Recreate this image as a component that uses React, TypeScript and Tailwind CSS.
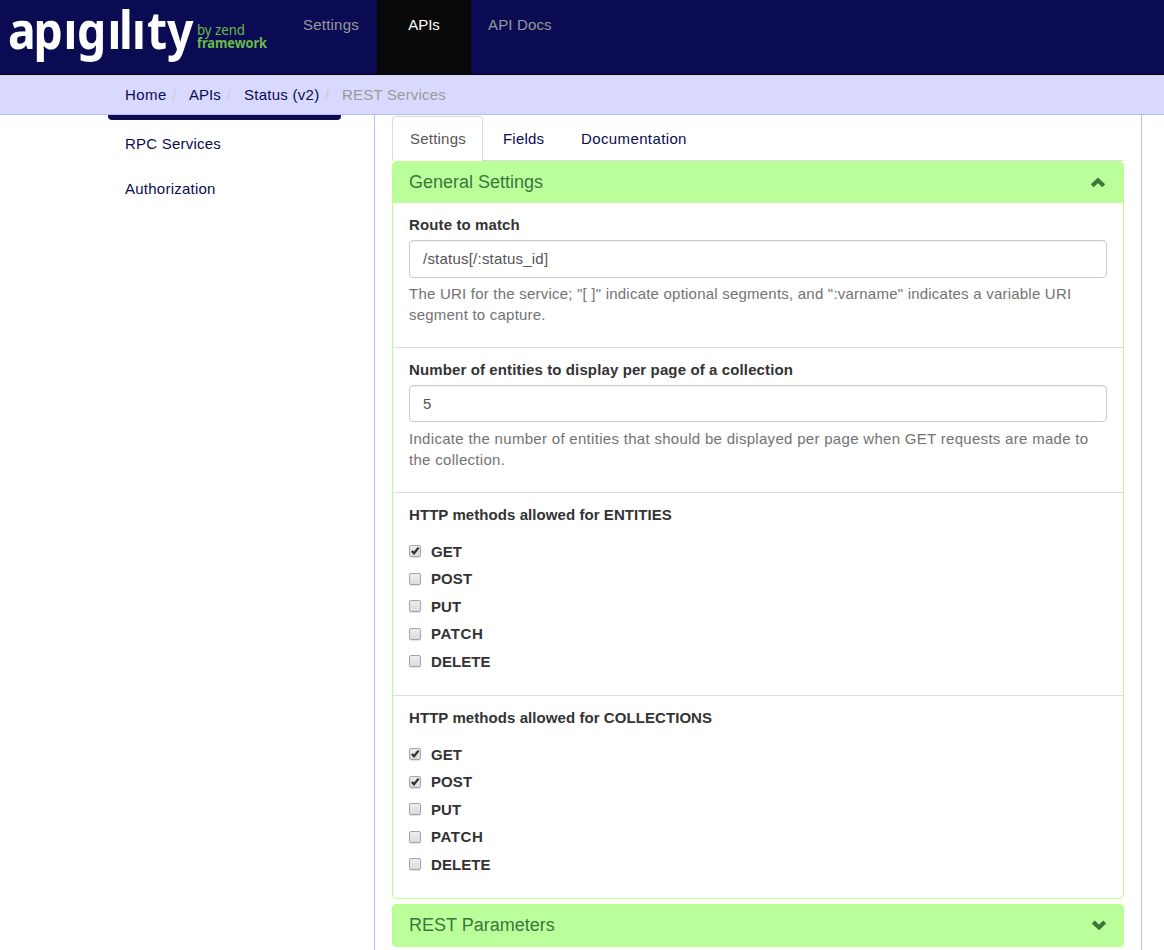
import React from 'react';

const METHODS = [
  { name: 'GET', tracking: 'tracking-[0.1px]' },
  { name: 'POST', tracking: 'tracking-[0.1px]' },
  { name: 'PUT', tracking: 'tracking-[0.1px]' },
  { name: 'PATCH', tracking: 'tracking-[0.6px]' },
  { name: 'DELETE', tracking: 'tracking-[0.05px]' },
];

function Logo() {
  return (
    <svg width="285" height="74" viewBox="0 0 285 74" className="block shrink-0" role="img" aria-label="apigility by zend framework">
      <defs>
        <clipPath id="wordmark">
          <rect x="0" y="20.5" width="196" height="53" />
          <rect x="120" y="0" width="14" height="22" />
          <rect x="145" y="0" width="20" height="22" />
        </clipPath>
      </defs>
      <g clipPath="url(#wordmark)">
        <text
          transform="scale(0.89 1)"
          x="9 37.6 71.3 86.5 120.8 133.7 148.3 165.2 187.6"
          y="49"
          fontSize="52"
          fontWeight="700"
          fill="#ffffff"
          fontFamily="'Noto Sans', sans-serif"
        >
          apigility
        </text>
      </g>
      <text x="197" y="34.5" fontSize="14" fill="#69bd45" fontFamily="'Noto Sans', sans-serif" textLength="48" lengthAdjust="spacingAndGlyphs">
        by zend
      </text>
      <text x="197" y="48" fontSize="14" fontWeight="700" fill="#69bd45" fontFamily="'Noto Sans', sans-serif" textLength="70" lengthAdjust="spacingAndGlyphs">
        framework
      </text>
    </svg>
  );
}

function Chevron({ down = false }: { down?: boolean }) {
  return (
    <svg width="16" height="12" viewBox="0 0 16 12" className="mb-[2px] block" aria-hidden="true">
      <path
        d={down ? 'M0.8 4.4 L3.7 1.5 L8 5.5 L12.3 1.5 L15.2 4.4 L8 11.3 Z' : 'M0.8 8.3 L8 1.4 L15.2 8.3 L12.3 11.2 L8 7.2 L3.7 11.2 Z'}
        fill="#3c763d"
      />
    </svg>
  );
}

function Checkbox({ checked }: { checked: boolean }) {
  return (
    <span className="mt-[4.2px] block h-[12px] w-[12px] shrink-0 rounded-[2px] border border-[#a5a5a5] bg-gradient-to-b from-[#ededed] to-[#dcdcdc] shadow-[0_1px_1px_rgba(0,0,0,0.12)]">
      {checked && (
        <svg width="10" height="10" viewBox="0 0 10 10" className="block" aria-hidden="true">
          <path d="M1.8 5 L4 7.3 L8.6 1.6" fill="none" stroke="#333333" strokeWidth="2.3" />
        </svg>
      )}
    </span>
  );
}

function MethodList({ title, checked, last = false }: { title: string; checked: string[]; last?: boolean }) {
  return (
    <section className={last ? 'h-[202px] px-4 pt-[11px]' : 'h-[203px] border-b border-[#dddddd] px-4 pt-[11px]'}>
      <h3 className="h-[36.9px] font-bold tracking-[0.07px] text-[#333333]">{title}</h3>
      {METHODS.map(({ name, tracking }) => (
        <label key={name} className="flex h-[27.5px] gap-[10px] font-bold text-[#333333]">
          <Checkbox checked={checked.includes(name)} />
          <span className={tracking}>{name}</span>
        </label>
      ))}
    </section>
  );
}

type FieldProps = { label: string; value: string; help: [string, string]; inputClass: string; helpClass: string };

function Field({ label, value, help, inputClass, helpClass }: FieldProps) {
  return (
    <section className="h-[145px] border-b border-[#dddddd] px-4 pt-[11px]">
      <h3 className="mb-[5px] h-[21px] font-bold tracking-[0.12px] text-[#333333]">{label}</h3>
      <div className={`flex items-center rounded-[4px] border border-[#cccccc] bg-white px-[13px] tracking-[0.22px] text-[#555555] shadow-[inset_0_1px_1px_rgba(0,0,0,0.075)] ${inputClass}`}>
        {value}
      </div>
      <p className={`whitespace-nowrap text-[#737373] ${helpClass}`}>
        {help[0]}
        <br />
        {help[1]}
      </p>
    </section>
  );
}

export default function App() {
  return (
    <div className="flex h-[950px] w-full flex-col overflow-hidden bg-white font-['Liberation_Sans',Arial,sans-serif] text-[15px] leading-[21.43px] text-[#0b0b52]">
      <header className="flex h-[75px] shrink-0 border-b border-[#080808] bg-[#0b0b54]">
        <Logo />
        <nav className="flex text-[#999999]">
          <a className="w-[92px] pl-[18px] pt-[14px] tracking-[0.22px]">Settings</a>
          <a className="w-[94px] bg-[#080808] pt-[14px] text-center text-white">APIs</a>
          <a className="pl-[17px] pt-[14px] tracking-[0.15px]">API Docs</a>
        </nav>
      </header>

      <div className="flex h-[40px] shrink-0 border-b border-[#b8b8ff] bg-[#d9d9ff] pl-[125px] pt-[9px]">
        <span className="w-[47px] tracking-[0.45px]">Home</span>
        <span className="w-[17px] text-[#cccccc]">/</span>
        <span className="w-[38px]">APIs</span>
        <span className="w-[17px] text-[#cccccc]">/</span>
        <span className="w-[81px] tracking-[0.27px]">Status (v2)</span>
        <span className="w-[17px] text-[#cccccc]">/</span>
        <span className="tracking-[0.2px] text-[#999999]">REST Services</span>
      </div>

      <div className="flex min-h-0 flex-1">
        <aside className="w-[374px] shrink-0 pl-[108px]">
          <div className="h-[5px] w-[233px] rounded-b-[4px] bg-[#0b0b54]" />
          <a className="block h-[45px] pl-[17px] pt-[13px] tracking-[0.22px]">RPC Services</a>
          <a className="block h-[45px] pl-[17px] pt-[13px] tracking-[0.24px]">Authorization</a>
        </aside>

        <main className="w-[768px] shrink-0 border-x border-[#b8b8ff] px-[17px] pt-px">
          <div className="flex h-[45px] border-b border-[#dddddd]">
            <a className="h-[45px] w-[91px] rounded-t-[4px] border border-b-0 border-[#dddddd] bg-white pl-[17px] pt-[11px] tracking-[0.22px] text-[#555555]">Settings</a>
            <a className="w-[78px] pl-[20px] pt-[12px] tracking-[0.2px]">Fields</a>
            <a className="pl-[20px] pt-[12px] tracking-[0.38px]">Documentation</a>
          </div>

          <div className="h-[738px] rounded-[4px] border border-[#bbff88] bg-white">
            <div className="flex h-[41px] items-center justify-between rounded-t-[3px] bg-[#bbff9b] pl-4 pr-[17px] text-[18px] text-[#3c763d]">
              <h2>General Settings</h2>
              <Chevron />
            </div>
            <Field
              label="Route to match"
              value="/status[/:status_id]"
              help={['The URI for the service; "[ ]" indicate optional segments, and ":varname" indicates a variable URI', 'segment to capture.']}
              inputClass="h-[38px] mb-[4.5px]"
              helpClass="tracking-[0.22px]"
            />
            <Field
              label="Number of entities to display per page of a collection"
              value="5"
              help={['Indicate the number of entities that should be displayed per page when GET requests are made to', 'the collection.']}
              inputClass="h-[37px] mb-[5.5px]"
              helpClass="tracking-[0.3px]"
            />
            <MethodList title="HTTP methods allowed for ENTITIES" checked={['GET']} />
            <MethodList title="HTTP methods allowed for COLLECTIONS" checked={['GET', 'POST']} last />
          </div>

          <div className="mt-[5px] flex h-[43px] items-center justify-between rounded-[4px] border border-[#bbff88] bg-[#bbff9b] pl-4 pr-4 text-[18px] text-[#3c763d]">
            <h2>REST Parameters</h2>
            <Chevron down />
          </div>
        </main>
      </div>
    </div>
  );
}
